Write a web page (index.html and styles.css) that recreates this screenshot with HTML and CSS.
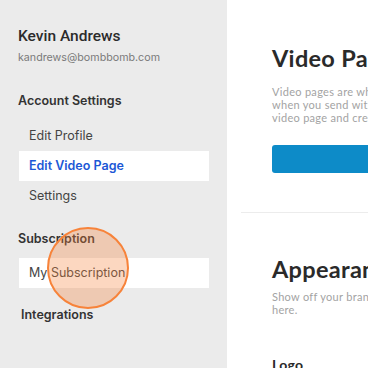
FILE: index.html
```html
<!DOCTYPE html>
<html lang="en">
<head>
    <meta charset="UTF-8">
    <meta name="viewport" content="width=device-width, initial-scale=1.0">
    <title>Settings - Edit Video Page</title>
    <link rel="stylesheet" href="styles.css">
</head>
<body>
    <aside class="sidebar">
        <div class="user-name">Kevin Andrews</div>
        <div class="user-email">kandrews@bombbomb.com</div>

        <div class="nav-title">Account Settings</div>
        <ul class="nav-list">
            <li class="nav-item">Edit Profile</li>
            <li class="nav-item active">Edit Video Page</li>
            <li class="nav-item">Settings</li>
        </ul>

        <div class="nav-title nav-title-sub">Subscription</div>
        <ul class="nav-list">
            <li class="nav-item boxed">My Subscription</li>
        </ul>

        <div class="nav-title nav-title-int">Integrations</div>

        <!-- tap indicator -->
        <div class="tap-ring"></div>
    </aside>

    <main class="content">
        <section class="section">
            <h1 class="section-title">Video Page</h1>
            <p class="section-text">Video pages are where your viewers land<br>when you send with BombBomb. Edit your<br>video page and create a look that fits you.</p>
            <button class="primary-btn" type="button">Customize Video Page</button>
        </section>

        <hr class="divider">

        <section class="section section-appearance">
            <h1 class="section-title">Appearance</h1>
            <p class="section-text">Show off your brand with a logo and colors right<br>here.</p>
            <h2 class="field-title">Logo</h2>
        </section>
    </main>
</body>
</html>
```

FILE: styles.css
```css
body { margin: 0; display: flex; height: 368px; overflow: hidden; background: #fff; }

.sidebar { position: relative; width: 227px; flex-shrink: 0; background: #ebebeb; padding: 26px 18px 0 18px; box-sizing: border-box; font-family: Inter, "Noto Sans", sans-serif; }
.user-name { font-family: Roboto, Inter, sans-serif; font-size: 15.5px; line-height: 20px; font-weight: 500; color: #2b2b2b; }
.user-email { margin-top: 5px; font-size: 10.7px; line-height: 14px; color: #7a7a7a; }

.nav-title { margin-top: 28px; font-size: 12.5px; line-height: 16px; font-weight: 600; color: #333; }
.nav-title-sub { margin-top: 20px; }
.nav-title-int { margin-top: 19px; padding-left: 3px; }

.nav-list { list-style: none; margin: 12px 0 0 0; padding: 0; }
.nav-title-sub + .nav-list { margin-top: 11px; }
.nav-item { height: 30px; line-height: 30px; padding-left: 10px; margin-left: 1px; font-size: 12.5px; color: #444; }
.nav-item.active { background: #fff; color: #1c58d6; font-weight: 600; }
.nav-item.boxed { background: #fff; }

.tap-ring { position: absolute; left: 47px; top: 227px; width: 82px; height: 82px; box-sizing: border-box; border: 2.5px solid #f7833a; border-radius: 50%; background: rgba(245, 130, 60, 0.32); }

.content { flex: 1; overflow: hidden; font-family: Lato, "Open Sans", sans-serif; }
.section { padding-left: 45px; white-space: nowrap; }
.section:first-child { padding-top: 43px; }
.section-title { margin: 0; font-size: 23.5px; line-height: 30px; font-weight: 700; letter-spacing: 0.3px; color: #2a2a2a; }
.section-text { margin: 12px 0 0 0; font-size: 11px; line-height: 13px; letter-spacing: 0.3px; color: #a3a3a3; }
.primary-btn { display: block; margin-top: 21px; width: 300px; height: 28px; border: none; border-radius: 3px; background: #0d8bc8; color: #fff; font-family: inherit; font-size: 11px; }

.divider { margin: 39px 0 0 14px; border: none; border-top: 1px solid #ececec; }

.section-appearance { padding-top: 41px; }
.section-appearance .section-text { margin-top: 6px; }
.field-title { margin: 40px 0 0 0; font-size: 14px; line-height: 18px; font-weight: 700; letter-spacing: 0.3px; color: #2a2a2a; }
```
